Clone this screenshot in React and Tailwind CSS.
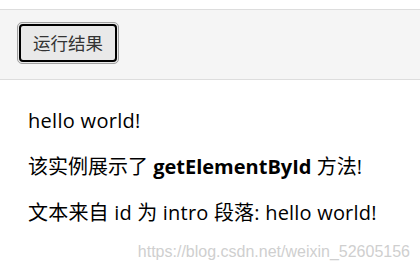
export default function App() {
  return (
    <div className="relative w-[420px] h-[273px] bg-white overflow-hidden text-black">
      <div className="pt-[9px]">
        <div className="h-[71px] border-y border-[#dddddd] bg-[#f5f5f5] pt-[12px] pl-[17px]">
          <button className="h-[42px] w-[102px] rounded-[5px] border border-[#a0a0a0] p-[1px] bg-[#e9e9e9]">
            <span className="flex h-full w-full items-center justify-center rounded-[4px] border-2 border-black text-[17.5px] text-[#333] font-['Noto_Sans_CJK_SC',sans-serif]">
              运行结果
            </span>
          </button>
        </div>
      </div>
      <div className="pl-[28px] pt-[27px] flex flex-col gap-[19px] text-[20px] leading-[27px] font-['Open_Sans','Noto_Sans_CJK_SC',sans-serif]">
        <p className="tracking-[0.3px]">hello world!</p>
        <p>
          该实例展示了 <b className="font-bold">getElementById</b> 方法!
        </p>
        <p className="tracking-[0.2px]">文本来自 id 为 intro 段落: hello world!</p>
      </div>
      <span className="absolute right-[10px] top-[243px] text-[16px] leading-[18px] text-[#cfcfcf] font-['Liberation_Sans',sans-serif]">
        https://blog.csdn.net/weixin_52605156
      </span>
    </div>
  );
}
